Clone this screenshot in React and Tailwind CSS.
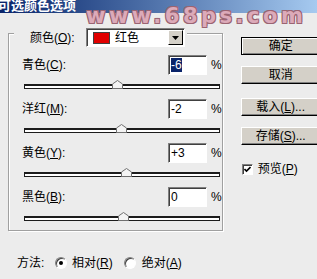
import React from 'react';

const rows = [
  { label: '青色', key: 'C', value: '-6', selected: true },
  { label: '洋红', key: 'M', value: '-2' },
  { label: '黄色', key: 'Y', value: '+3' },
  { label: '黑色', key: 'B', value: '0' },
];

const Thumb = ({ value }) => {
  // track is 196px wide, 0% sits in the middle
  const left = 98 + (parseInt(value, 10) / 100) * 98 - 5;
  return (
    <svg className="absolute bottom-[-1px]" style={{ left }} width="11" height="9" viewBox="0 0 11 9">
      <path d="M0.5 8.5 V4 L5.5 0.5 L10.5 4 V8.5 Z" fill="#f4f4f4" stroke="#707070" />
    </svg>
  );
};

const Btn = ({ children, isDefault }) => (
  <div
    className={`h-[18px] w-[80px] flex items-center justify-center bg-[#d4d0c8] text-[12px] leading-none ${
      isDefault
        ? 'border border-black shadow-[inset_1px_1px_0_#fff,inset_-1px_-1px_0_#808080]'
        : 'border border-t-white border-l-white border-r-black border-b-black shadow-[inset_-1px_-1px_0_#808080]'
    }`}
  >
    {children}
  </div>
);

const Radio = ({ checked }) => (
  <div className="w-[12px] h-[12px] rounded-full bg-white border border-t-[#808080] border-l-[#808080] border-r-white border-b-white shadow-[inset_1px_1px_0_#404040] flex items-center justify-center">
    {checked && <div className="w-[4px] h-[4px] rounded-full bg-black" />}
  </div>
);

const App = () => {
  return (
    <div className="relative w-[317px] h-[279px] overflow-hidden bg-[#ececec] text-black text-[12px] font-['Liberation_Sans','Noto_Sans_CJK_SC',sans-serif]">
      <div className="h-[13px] bg-gradient-to-r from-[#0a246a] to-[#a6caf0] text-white font-bold text-[13px] leading-[12px] whitespace-nowrap -indent-[2px]">
        可选颜色选项
      </div>

      <div className="flex pt-[20px]">
        <div className="ml-[8px] w-[227px]">
          <div className="relative h-[198px] border border-[#a0a0a0] shadow-[1px_1px_0_#fff,inset_1px_1px_0_#fff] pt-[21px]">
            <div className="absolute top-[-6px] left-[5px] flex items-center h-[19px] bg-[#ececec] pl-[16px] pr-[2px]">
              <span className="w-[56px] whitespace-nowrap">
                颜色(<span className="underline">O</span>):
              </span>
              <div className="w-[99px] h-[19px] bg-white border border-t-[#808080] border-l-[#808080] border-r-white border-b-white shadow-[inset_1px_1px_0_#404040] flex items-center pl-[6px] pr-[1px]">
                <div className="w-[17px] h-[12px] bg-[#e00000] border border-[#404040]" />
                <span className="ml-[5px] flex-1">红色</span>
                <div className="w-[15px] h-[15px] bg-[#d4d0c8] border border-t-white border-l-white border-r-black border-b-black flex items-center justify-center">
                  <svg width="7" height="4" viewBox="0 0 7 4">
                    <path d="M0 0 H7 L3.5 4 Z" fill="#000" />
                  </svg>
                </div>
              </div>
            </div>

            {rows.map((row) => (
              <div key={row.key} className="mb-[10px]">
                <div className="flex items-center h-[20px]">
                  <span className="w-[159px] pl-[13px] whitespace-nowrap">
                    {row.label}(<span className="underline">{row.key}</span>):
                  </span>
                  <div className="w-[39px] h-[20px] bg-white border border-t-[#808080] border-l-[#808080] border-r-white border-b-white shadow-[inset_1px_1px_0_#404040] flex items-center pl-[2px]">
                    {row.selected ? (
                      <span className="bg-[#0a246a] text-white leading-[14px]">{row.value}</span>
                    ) : (
                      <span>{row.value}</span>
                    )}
                  </div>
                  <span className="ml-[4px]">%</span>
                </div>
                <div className="relative mt-[9px] ml-[15px] w-[196px] h-[5px] bg-white border border-[#1c1c1c] border-t-2">
                  <Thumb value={row.value} />
                </div>
              </div>
            ))}
          </div>

          <div className="flex items-center mt-[23px] pl-[9px]">
            <span className="w-[38px]">方法:</span>
            <Radio checked />
            <span className="ml-[5px]">
              相对(<span className="underline">R</span>)
            </span>
            <div className="ml-[11px]">
              <Radio />
            </div>
            <span className="ml-[6px]">
              绝对(<span className="underline">A</span>)
            </span>
          </div>
        </div>

        <div className="ml-[18px] pt-[4px] flex flex-col">
          <Btn isDefault>确定</Btn>
          <div className="mt-[11px]">
            <Btn>取消</Btn>
          </div>
          <div className="mt-[14px]">
            <Btn>
              载入(<span className="underline">L</span>)...
            </Btn>
          </div>
          <div className="mt-[11px]">
            <Btn>
              存储(<span className="underline">S</span>)...
            </Btn>
          </div>
          <div className="flex items-center mt-[15px] ml-[1px]">
            <div className="w-[11px] h-[11px] bg-white border border-t-[#808080] border-l-[#808080] border-r-white border-b-white shadow-[inset_1px_1px_0_#404040] flex items-center justify-center">
              <svg width="7" height="7" viewBox="0 0 7 7">
                <path d="M0.5 3 L2.5 5 L6.5 1" fill="none" stroke="#000" strokeWidth="1.6" />
              </svg>
            </div>
            <span className="ml-[5px]">
              预览(<span className="underline">P</span>)
            </span>
          </div>
        </div>
      </div>

      <div className="absolute left-[86px] top-[6px] text-[21px] font-bold leading-none tracking-[3.5px] text-[#dcaab9] [text-shadow:1px_1px_0_#9a6472,-1px_-1px_0_#9a6472,1px_-1px_0_#9a6472,-1px_1px_0_#9a6472,0_1px_0_#9a6472,0_-1px_0_#9a6472] font-[family-name:'DejaVu_Sans',sans-serif] whitespace-nowrap">
        www.68ps.com
      </div>
    </div>
  );
};

export default App;
